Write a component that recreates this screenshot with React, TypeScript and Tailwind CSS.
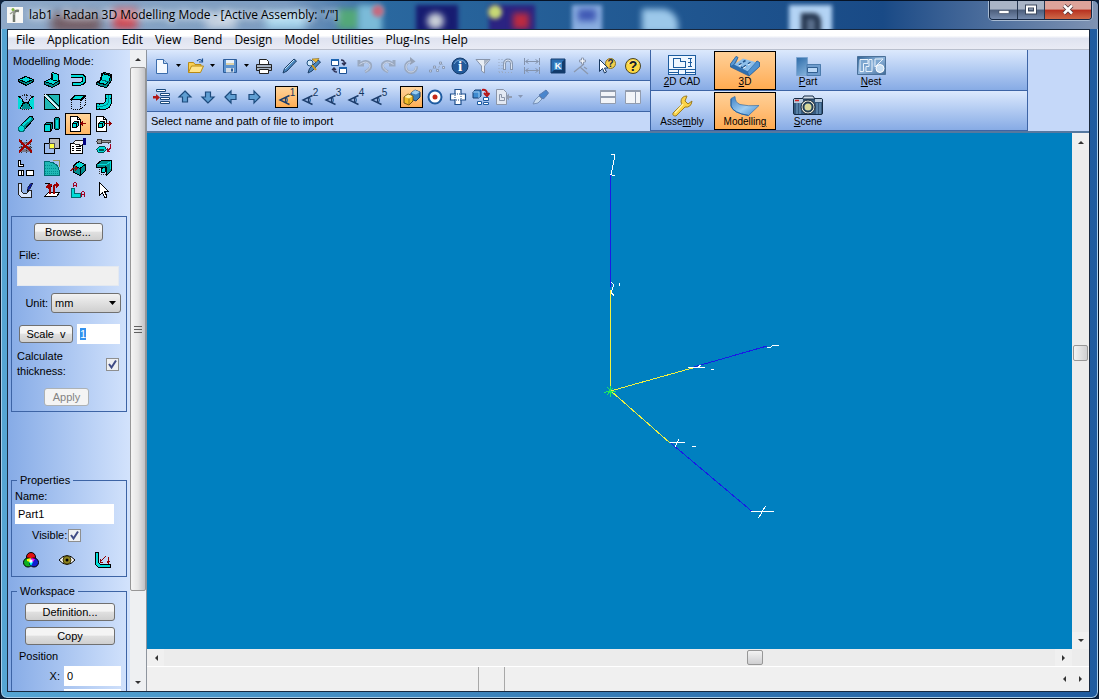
import React, { useEffect, useRef } from "react";

type Kids = { children?: React.ReactNode };

const C = "#00dcd8";
const D = "#008f90";

function Px({ children, smooth }: Kids & { smooth?: boolean }) {
  return (
    <svg width="16" height="16" viewBox="0 0 16 16" shapeRendering={smooth ? "auto" : "crispEdges"} aria-hidden="true" className="shrink-0">
      {children}
    </svg>
  );
}

function Ic({ children }: Kids) {
  return (
    <svg width="18" height="18" viewBox="0 0 18 18" fill="none" aria-hidden="true" className="shrink-0">
      {children}
    </svg>
  );
}

function PageArrow({ out }: { out?: boolean }) {
  return (
    <>
      <path d="M0.500 0.500h7l3 3v12h-10z" fill="#fff" stroke="#000" />
      <path d="M7.500 0.500v3h3" fill="none" stroke="#000" />
      <path d="M2.500 7.500l2-2h4v4l-2 2h-4z" fill={C} stroke="#000" />
      <path d="M2.500 7.500h4v4M6.500 7.500l2-2" fill="none" stroke="#000" />
      {out ? (
        <path d="M9 7h4V5h1v1h1v1h1v1h-1v1h-1v1h-1V8H9z" fill="#900000" />
      ) : (
        <path d="M16 7h-3V5h-1v1h-1v1h-1v1h1v1h1v1h1V8h3z" fill="#900000" />
      )}
    </>
  );
}

const modes: { name: string; art: React.ReactNode }[] = [
  {
    name: "Flat sheet",
    art: (
      <>
        <path d="M0.500 7.500l7-3 8 3v2l-7 4-8-4z" fill={D} stroke="#000" />
        <path d="M1 7.500l7-3 7 3-7 3z" fill={C} stroke="#000" />
      </>
    ),
  },
  {
    name: "Flange",
    art: (
      <>
        <path d="M0.500 9.500l7-3 8 2v3l-7 4-8-3z" fill={D} stroke="#000" />
        <path d="M1 9.500l6-3 8 2-6 4z" fill={C} stroke="#000" />
        <path d="M7.500 1.500l1-1 6 2v7l-7-2z" fill={C} stroke="#000" />
        <path d="M8.500 2v6" stroke="#000" />
      </>
    ),
  },
  {
    name: "Hem",
    art: (
      <>
        <path d="M1 3.500h9.500a4 4 0 0 1 0 8H2" fill="none" stroke="#000" strokeWidth="4" />
        <path d="M1 3.500h9.500a4 4 0 0 1 0 8H3" fill="none" stroke={C} strokeWidth="2" />
      </>
    ),
  },
  {
    name: "Curved sheet",
    art: (
      <>
        <path d="M5.500 1.500l3-1 7 2v6l-5 7-5-1-5-2v-2l4-2z" fill={D} stroke="#000" />
        <path d="M6.500 1.500l8 2-1 5-4 4-8-2 4-3z" fill={C} stroke="#000" />
        <path d="M6 8l7 2" stroke="#006c70" />
      </>
    ),
  },
  {
    name: "Corner",
    art: (
      <>
        <path d="M0 3q5 2 5 8l-3 4H0zM16 3q-5 2-5 8l3 4h2z" fill={C} />
        <path d="M5 10l3-2 3 2 2 5H3z" fill={D} />
        <path d="M0 2q6 3 5 8l-3 5M16 2q-6 3-5 8l3 5M5 10l3-2 3 2" fill="none" stroke="#000" />
        <path d="M2 2.500l6-2 6 2M8.500 1v6M4 15.500h8" fill="none" stroke="#222" strokeDasharray="1 1" />
      </>
    ),
  },
  {
    name: "Split",
    art: (
      <>
        <rect x="0.500" y="0.500" width="15" height="15" fill={D} stroke="#000" />
        <path d="M1 3l12 12H1zM4 1h11v11z" fill="#1fb8b5" />
        <path d="M1 1l14 14" stroke="#d8f0f8" strokeWidth="2" />
        <path d="M1 3l12 12M4 1l11 11" stroke="#000" />
      </>
    ),
  },
  {
    name: "Box",
    art: (
      <>
        <path d="M1 5.500l4-4h10l-4 4z" fill={C} stroke="#000" />
        <path d="M1.500 6v9h9V6M11 15l4-4V2" fill="none" stroke="#000" strokeDasharray="1 1" />
        <path d="M11 6.500l4-4" stroke="#000" strokeWidth="2" />
      </>
    ),
  },
  {
    name: "Elbow",
    art: (
      <>
        <path d="M9.500 0.500h6v6q0 9-9 9h-6v-6h5q4 0 4-4z" fill={C} stroke="#000" />
        <path d="M3.500 10v5M10 4.500h5" stroke="#000" strokeDasharray="1 1" />
        <path d="M12.500 1v5q0 6-6 6H1" fill="none" stroke={D} />
      </>
    ),
  },
  {
    name: "Rod",
    art: (
      <>
        <path d="M1.500 10.500l10-10h3l1 3-10 11z" fill={D} stroke="#000" />
        <path d="M4 10l9-8" stroke={C} strokeWidth="2" />
        <circle cx="3.500" cy="12.500" r="3" fill={C} stroke="#006c70" />
      </>
    ),
  },
  {
    name: "Blocks",
    art: (
      <>
        <path d="M0.500 8.500l2-2h6v6l-2 3h-6z" fill={D} stroke="#000" />
        <path d="M0.500 8.500h6v7M6.500 8.500l2-2" fill="none" stroke="#000" />
        <rect x="1" y="9" width="5" height="6" fill={C} />
        <rect x="10.500" y="1.500" width="5" height="12" rx="2" fill={D} stroke="#000" />
        <path d="M12.500 4v8" stroke={C} strokeWidth="2" />
      </>
    ),
  },
  { name: "Import", art: <PageArrow /> },
  { name: "Export", art: <PageArrow out /> },
  {
    name: "Delete",
    art: (
      <>
        <path d="M4 4h9v2H4zM2 8h11v2H2zM3 11h11v3H3z" fill="#77798c" />
        <path d="M3.500 2v13M8.500 2v13M12.500 2v13M1 9.500h13" stroke="#333" strokeDasharray="1 1" />
        <path d="M1 2l13 12M14 2L1 14" stroke="#a00000" strokeWidth="2" />
      </>
    ),
  },
  {
    name: "Combine",
    art: (
      <>
        <rect x="5.500" y="0.500" width="10" height="10" fill="#b9b9b9" stroke="#000" />
        <rect x="0.500" y="5.500" width="10" height="10" fill="none" stroke="#000" />
        <rect x="5.500" y="5.500" width="5" height="5" fill="#ffff40" stroke="#555" />
      </>
    ),
  },
  {
    name: "Edit properties",
    art: (
      <>
        <path d="M0.500 5.500h12v10h-12z" fill="#fff" stroke="#000" />
        <path d="M2 8.500h2M6 8.500h5M2 10.500h2M6 10.500h5M2 12.500h2M6 12.500h5" stroke="#000" />
        <path d="M3 5l3-3h7l2 3-4 3-3-2H5z" fill="#f2f2f2" stroke="#222" />
        <path d="M13 0h3v7h-3z" fill="#000080" />
      </>
    ),
  },
  {
    name: "Key",
    art: (
      <>
        <path d="M5 2.500h9v2H5M12 4v2" fill="#999" stroke="#444" />
        <circle cx="3.500" cy="3.500" r="2.500" fill="#999" stroke="#333" />
        <path d="M0.500 11.500l3-3h5l2 3-3 3h-5z" fill={C} stroke="#004f50" />
        <path d="M3 11.500h5" stroke="#004f50" strokeWidth="2" />
        <path d="M14.500 6v4l-3 3M11 10v3h3" fill="none" stroke="#a00020" />
      </>
    ),
  },
  {
    name: "Nest outlines",
    art: (
      <>
        <path d="M0.500 0.500h2v4h3v2h-5z" fill="#fff" stroke="#000" />
        <path d="M0.500 10.500h5v5h-5zM8.500 10.500h7v5h-7z" fill="#fff" stroke="#000" />
        <path d="M3.500 11v5" stroke="#000" />
      </>
    ),
  },
  {
    name: "Fillet",
    art: (
      <>
        <path d="M0.500 1.500h4q11 2 11 11v3h-15z" fill="#1fb8b5" stroke="#006c70" />
        <path d="M1 5h7M1 8h11M1 11h13M1 13h14" stroke={D} strokeDasharray="1 1" />
        <path d="M9 0.500h6.500v6" fill="none" stroke="#95955a" />
      </>
    ),
  },
  {
    name: "Insert block",
    art: (
      <>
        <path d="M3.500 5.500l5-4 7 3v6l-5 5-7-3z" fill={D} stroke="#000" />
        <path d="M4 5.500l5-4 6 3-5 4z" fill={C} stroke="#000" />
        <path d="M10.500 8v7" stroke="#000" />
        <path d="M0 10h1V9h1V8h3V6h1v1h1v1h1v1H7v1H6v1H5V9H3v1H2v1H0z" fill="#8c1010" />
      </>
    ),
  },
  {
    name: "Bracket",
    art: (
      <>
        <path d="M0.500 4.500l5-4h10v10l-5 5v-8h-10z" fill={D} stroke="#000" />
        <path d="M2 4h9l3-2v7" fill="none" stroke={C} />
        <path d="M5 9l4-2v5l-4 1z" fill={C} stroke="#000" />
        <path d="M3.500 9v5h7" fill="none" stroke="#333" strokeDasharray="1 1" />
      </>
    ),
  },
  {
    name: "Sketch",
    art: (
      <>
        <path d="M0.500 1.500h3v6q0 4 4 4 2 0 3-3h3v7h-10l-3-3z" fill="#d7e4fb" stroke="#222" />
        <path d="M15 1l-3 6-3 2 1-4 3-4z" fill="#0e1f9c" stroke="#000" strokeWidth="0.500" />
      </>
    ),
  },
  {
    name: "Unfold",
    art: (
      <>
        <path d="M0.500 14.500l4-4h11l-3 4z" fill="#fff" stroke="#000" />
        <path d="M1 1.500h5M4 4.500h4" stroke="#000" />
        <path d="M5 3h2v9H5zM9 12V4q0-2 3-2V0l4 3-4 3V4h-1v8z" fill="#a00000" />
        <path d="M1 5l3-3h4v2H5v3z" fill="#a00000" />
      </>
    ),
  },
  {
    name: "Dimension",
    art: (
      <>
        <path d="M1.500 6.500h3v5h6v4h-9z" fill={C} stroke="#006c70" />
        <path d="M3.500 1v4M6.500 1v4M4 0.500h2M4 3.500h2M11.500 10v5M14.500 10v5M12 9.500h2M12 12.500h2" stroke="#a00020" />
      </>
    ),
  },
  {
    name: "Select",
    art: <path d="M3.500 0.500v13l3-3 2 5h2v-2l-2-4h4z" fill="#fff" stroke="#000" />,
  },
];

function ToolButton({ label, active, disabled, children }: Kids & { label: string; active?: boolean; disabled?: boolean }) {
  return (
    <button
      aria-label={label}
      disabled={disabled}
      className={
        active
          ? "flex h-[22px] w-[23px] shrink-0 items-center justify-center border border-black bg-gradient-to-b from-[#ffd49a] to-[#ffae54]"
          : "flex h-[22px] w-[23px] shrink-0 items-center justify-center"
      }
    >
      {children}
    </button>
  );
}

function Drop({ label, dim }: { label: string; dim?: boolean }) {
  return (
    <button aria-label={label} className="flex h-[22px] w-[11px] shrink-0 items-center justify-center">
      <svg width="5" height="3" viewBox="0 0 5 3" aria-hidden="true">
        <path d="M0 0h5L2.500 3z" fill={dim ? "#8797b5" : "#000"} />
      </svg>
    </button>
  );
}

const Gap = () => <span className="w-[3px] shrink-0" />;

const OUT = "#1c4a7c";
const MID = "#5f9ed2";
const GR = "#9aa9c0";

function Arrow({ turn }: { turn: number }) {
  return (
    <Ic>
      <path d="M9 3l6 6h-3.500v5h-5V9H3z" transform={`rotate(${turn} 9 9)`} fill={MID} stroke={OUT} strokeWidth="1.200" />
    </Ic>
  );
}

function ViewAngle({ n, active }: { n: number; active?: boolean }) {
  return (
    <ToolButton label={`View ${n}`} active={active}>
      <span className="flex items-start text-[10px] leading-[10px] text-[#12355e]">
        <svg width="12" height="18" viewBox="0 0 12 18" fill="none" aria-hidden="true">
          <path d="M11.500 7.500L2 12l9.500 4.500M8.500 9q-2 3 0 6" stroke="#1c3d6c" strokeWidth="1.400" />
          <path d="M9 9.500q2 2.500 0 5z" fill="#2b6aa8" />
        </svg>
        {n}
      </span>
    </ToolButton>
  );
}

function MainToolbar() {
  return (
    <div className="flex h-[31px] items-center border-b border-[#3d64a5] bg-gradient-to-b from-[#dce9fd] to-[#87abe5] pt-px pr-[6px] pl-[3px]">
      <ToolButton label="New">
        <Ic><path d="M3.500 2.500h7l4 4v10h-11z" fill="#f4f9ff" stroke="#3b6cab" /><path d="M10.500 2.500v4h4" fill="#bcd6f2" stroke="#3b6cab" /></Ic>
      </ToolButton>
      <Drop label="New options" />
      <ToolButton label="Open">
        <Ic><path d="M1.500 15.500v-10h5l1.500 2h6v3" fill="#f8cf55" stroke="#b98a14" /><path d="M1.500 15.500l3-6.500h12l-3 6.500z" fill="#ffe48a" stroke="#b98a14" /><path d="M10 4q3-3 5 0M15.500 1.500V5H12" stroke="#1b4f92" strokeWidth="1.200" /></Ic>
      </ToolButton>
      <Drop label="Open options" />
      <ToolButton label="Save">
        <Ic><path d="M2.500 2.500h13v13h-13z" fill="#5d94cf" stroke="#2c5c9a" /><path d="M5 3h8v5H5z" fill="#e8f2fc" /><path d="M5 11h8v4.500H5z" fill="#cfdbe8" /><path d="M10 11.500h2v3h-2z" fill="#2c5c9a" /><path d="M5 6h8v2H5z" fill="#dfd2a8" /></Ic>
      </ToolButton>
      <Drop label="Save options" />
      <ToolButton label="Print">
        <Ic><path d="M4.500 7V2.500h7l2 2V7" fill="#fff" stroke="#222" /><path d="M1.500 7.500h15v6h-15z" fill="#aab6c6" stroke="#222" /><path d="M2 10.500h14" stroke="#333" /><path d="M4.500 12.500h9v4h-9z" fill="#fff" stroke="#222" /></Ic>
      </ToolButton>
      <Gap />
      <ToolButton label="Pen">
        <Ic><path d="M2 16l1.500-4.500L13 2l2.500 2L6 14z" fill="#4b87bd" stroke="#1c3f68" /><path d="M4 12l9-9" stroke="#bfe0f5" /></Ic>
      </ToolButton>
      <ToolButton label="Pencil settings">
        <Ic><path d="M4 16l1.500-4.500L14 3l2.500 2L8 14z" fill="#4b87bd" stroke="#1c3f68" /><circle cx="6" cy="6" r="3" fill="#d3eafa" stroke="#205080" /><path d="M8 8l4 5" stroke="#d09818" strokeWidth="2" /><path d="M8 2l7-.5-3 4z" fill="#f4bf35" stroke="#7d611a" strokeWidth=".6" /></Ic>
      </ToolButton>
      <Gap />
      <ToolButton label="Swap windows">
        <Ic><path d="M1.500 2.500h7v6h-7zM9.500 10.500h7v6h-7z" fill="#fff" stroke="#1b4f92" /><path d="M1 3h8M9 11h8" stroke="#1b63b0" strokeWidth="2" /><path d="M11 3q4 0 3 4M12 6l2 2 2-2.500M7 15q-4 0-3-3M2 13l2-2 2 2" stroke="#2b2f52" strokeWidth="1.400" /></Ic>
      </ToolButton>
      <Gap />
      <ToolButton label="Undo" disabled>
        <Ic><path d="M3 3v5h5M3.500 7.500Q10 2 14 6.500q2.500 5-5 8.500" stroke={GR} strokeWidth="3" /><path d="M3.500 7.500Q10 3 13.500 7q2 4-4 7.500" stroke="#cbd6ea" /></Ic>
      </ToolButton>
      <ToolButton label="Redo" disabled>
        <Ic><path d="M15 3v5h-5M14.500 7.500Q8 2 4 6.500q-2.500 5 5 8.500" stroke={GR} strokeWidth="3" /><path d="M14.500 7.500Q8 3 4.500 7q-2 4 4 7.500" stroke="#cbd6ea" /></Ic>
      </ToolButton>
      <ToolButton label="Repeat" disabled>
        <Ic><path d="M14.500 9.500a5.500 5.500 0 1 1-5-5" stroke={GR} strokeWidth="3" /><path d="M8 0l5.500 4.500L8 8z" fill="#96a2b6" /><path d="M14 10a5 5 0 1 1-5-5" stroke="#cbd6ea" /></Ic>
      </ToolButton>
      <Gap />
      <ToolButton label="Points" disabled>
        <Ic><path d="M3 14l3.500-4 3 3L13 6l3 4" stroke={GR} strokeDasharray="2 1" /><path d="M1.500 13h2v2h-2zM5.500 9h2v2h-2zM8.500 12.500h2v2h-2zM11.500 5h2v2h-2zM14.500 9.500h2v2h-2z" fill="#d5deed" stroke="#8090aa" strokeWidth=".8" /></Ic>
      </ToolButton>
      <ToolButton label="Information">
        <Ic><circle cx="9" cy="9" r="8" fill="#225a9a" stroke="#153c6c" /><path d="M3 7a6.500 6.500 0 0 1 12 0" stroke="#75a6d5" /><text x="9" y="14" textAnchor="middle" fill="#fff" className="font-['Liberation_Serif',serif] text-[15px] font-bold">i</text></Ic>
      </ToolButton>
      <ToolButton label="Filter">
        <Ic><path d="M2 2.500h14L10.500 9v7l-3-2V9z" fill="#e8edf4" stroke="#8794aa" /><path d="M10 3h5l-5 5z" fill="#a9b4c4" /></Ic>
      </ToolButton>
      <ToolButton label="Snap" disabled>
        <Ic><path d="M2 2v13M5 2v13M2 15.500h14" stroke={GR} strokeDasharray="1 2" /><path d="M7.500 13V6.500a3.500 3.500 0 0 1 7 0V13" stroke="#8797b0" strokeWidth="3" /><path d="M7.500 12V6.500a3.500 3.500 0 0 1 7 0V12" stroke="#dbe4f2" /></Ic>
      </ToolButton>
      <Gap />
      <ToolButton label="Distances" disabled>
        <Ic><path d="M1.500 1v7M16.500 1v7M1.500 10v7M16.500 10v7M3 4.500h12M3 13.500h12M5.500 2.500l-3 2 3 2M12.500 2.500l3 2-3 2M5.500 11.500l-3 2 3 2M12.500 11.500l3 2-3 2" stroke="#8594ad" /></Ic>
      </ToolButton>
      <Gap />
      <ToolButton label="Keypad">
        <Ic><path d="M2 2h14v14H2z" fill="#2b6fb2" stroke="#163d6e" /><path d="M2 16l3-3h8V5l3-3v14z" fill="#123a6b" /><path d="M5 5h8v8H5z" fill="#3e8ac8" /><text x="9" y="12" textAnchor="middle" fill="#fff" className="font-['Liberation_Sans',sans-serif] text-[9px] font-bold">K</text></Ic>
      </ToolButton>
      <ToolButton label="Trim" disabled>
        <Ic><path d="M2 15L12 7M8 10l8 7M12 10l3 2" stroke="#8b98ae" strokeWidth="1.300" /><path d="M9.500 1h2v2h2v2h-2v2h-2V5h-2V3h2z" fill="#f3f7fc" stroke="#7d8aa1" strokeWidth=".8" /></Ic>
      </ToolButton>
      <Gap />
      <ToolButton label="Context help">
        <Ic><circle cx="12.500" cy="6.500" r="5" fill="#f4cf4d" stroke="#8b7321" /><text x="12.500" y="10" textAnchor="middle" fill="#202840" className="font-['Liberation_Sans',sans-serif] text-[10px] font-bold">?</text><path d="M1.500 2.500v12l3-3 2 4.500 2-1-2-4h3.500z" fill="#fff" stroke="#17375f" /></Ic>
      </ToolButton>
      <Gap />
      <ToolButton label="Help">
        <Ic><circle cx="9" cy="9" r="7.500" fill="#fcd843" stroke="#4a4425" /><path d="M4 7a5.500 5.500 0 0 1 10 0" stroke="#fff2ac" /><text x="9" y="14" textAnchor="middle" fill="#15202c" className="font-['Liberation_Sans',sans-serif] text-[14px] font-bold">?</text></Ic>
      </ToolButton>
    </div>
  );
}

function SecondToolbar() {
  return (
    <div className="flex h-[31px] items-center border-b border-[#3d64a5] bg-gradient-to-b from-[#dce9fd] to-[#87abe5] pt-px pr-[6px] pl-[3px]">
      <ToolButton label="Insert row">
        <Ic><path d="M3.500 1.500h9v2h-9zM7.500 5.500h9v2h-9zM7.500 9.500h9v2h-9zM7.500 13.500h9v2h-9z" fill="#fff" stroke={OUT} /><path d="M0 8h3V6l4 3.500L3 13v-2.500H0z" fill="#b01818" /></Ic>
      </ToolButton>
      <ToolButton label="Move up"><Arrow turn={0} /></ToolButton>
      <ToolButton label="Move down"><Arrow turn={180} /></ToolButton>
      <ToolButton label="Move left"><Arrow turn={270} /></ToolButton>
      <ToolButton label="Move right"><Arrow turn={90} /></ToolButton>
      <span className="w-[10px]" />
      <ViewAngle n={1} active />
      <ViewAngle n={2} />
      <ViewAngle n={3} />
      <ViewAngle n={4} />
      <ViewAngle n={5} />
      <span className="w-[10px]" />
      <ToolButton label="Shaded" active>
        <Ic><path d="M8 5l4-3 5 2v5l-4 4-5-2z" fill="#3d80ba" stroke="#1c3f68" /><path d="M8 5l5 1.500L17 4l-5-2z" fill="#9ccdf0" /><path d="M1 9l4-3 5 2v5l-4 4-5-2z" fill="#f2bd28" stroke="#6f5512" /><path d="M1.500 9L6 10.500 9.500 8 5 6.500z" fill="#fff0a0" /><path d="M6 10.500V16" stroke="#a07a14" /></Ic>
      </ToolButton>
      <ToolButton label="Target">
        <Ic><circle cx="9" cy="9" r="6.500" fill="#fff" stroke="#1e5ba0" strokeWidth="2" /><circle cx="9" cy="9" r="2.500" fill="#c42a18" /></Ic>
      </ToolButton>
      <ToolButton label="Unfold part">
        <Ic><path d="M6 1.500h6v4.500h4.500v6H12v4.500H6V12H1.500V6H6z" fill="#fff" stroke="#1e4f8c" strokeWidth="1.200" /><path d="M6 6h6v6H6z" stroke="#1e4f8c" strokeDasharray="1 1" /></Ic>
      </ToolButton>
      <ToolButton label="Explode">
        <Ic><path d="M1 4l2-2h6v6l-2 2H1z" fill="#3f8bd0" stroke="#183f72" /><path d="M1 4h6v6" stroke="#9cc8ee" /><path d="M10 2q5-1 5 4M12 5l3 3 2.500-3" stroke="#b81414" strokeWidth="2" /><path d="M11.500 9.500h5v3h-5zM5.500 13.500h4v3h-4zM11.500 14.500h5v2h-5z" fill="#fff" stroke="#1e5ba0" /></Ic>
      </ToolButton>
      <ToolButton label="Export view" disabled>
        <Ic><path d="M1.500 1.500h7l3 3v12h-10z" fill="#e3e9f3" stroke="#8b95a8" /><path d="M4.500 6.500h2v3h3v3h-5z" stroke="#8b95a8" /><path d="M17 8h-3V5.500L10.500 9l3.500 3.500V10h3z" fill="#929db1" /></Ic>
      </ToolButton>
      <Drop label="Export view options" dim />
      <Gap />
      <ToolButton label="Colour picker">
        <Ic><path d="M1 16l2-4 4-4 3 3-4 4z" fill="#c7dbf1" stroke="#7590b8" /><path d="M7 7l4 4 2-1.500 3.500-4.500-2.500-3-4 3z" fill="#4a86cd" stroke="#5b7cb0" /></Ic>
      </ToolButton>
      <div className="ml-auto flex gap-[2px]">
        <ToolButton label="Split horizontally">
          <Ic><path d="M1.500 2.500h15v13h-15z" fill="#f2f4f8" stroke="#929cae" /><path d="M1.500 3h15M1.500 9h15" stroke="#929cae" strokeWidth="2" /></Ic>
        </ToolButton>
        <ToolButton label="Split vertically">
          <Ic><path d="M1.500 2.500h15v13h-15z" fill="#f2f4f8" stroke="#929cae" /><path d="M1.500 3h15" stroke="#929cae" strokeWidth="2" /><path d="M11.500 3v13" stroke="#929cae" /></Ic>
        </ToolButton>
      </div>
    </div>
  );
}

function AppButton({ pre = "", hot, post = "", active, children }: Kids & { pre?: string; hot: string; post?: string; active?: boolean }) {
  return (
    <button
      className={
        active
          ? "flex h-full w-[62px] shrink-0 flex-col items-center justify-center border border-black bg-gradient-to-b from-[#ffd097] to-[#ffab50] text-[10px] leading-[10px]"
          : "flex h-full w-[62px] shrink-0 flex-col items-center justify-center border border-transparent text-[10px] leading-[10px]"
      }
    >
      <svg width="32" height="22" viewBox="0 0 32 22" fill="none" aria-hidden="true" className="shrink-0">
        {children}
      </svg>
      <span className="whitespace-nowrap">
        {pre}<u>{hot}</u>{post}
      </span>
    </button>
  );
}

function AppPanel() {
  return (
    <div className="flex w-[378px] flex-col border-x border-[#3d64a5]">
      <div className="flex h-[41px] gap-px border-b border-[#3d64a5] bg-gradient-to-b from-[#dce9fd] to-[#87abe5] pt-px">
        <AppButton hot="2" post="D CAD">
          <g shapeRendering="crispEdges">
            <path d="M2.500 0.500h27v19h-27z" fill="#eef6ff" stroke="#1d5c9e" />
            <path d="M7.500 3.500h7v3h5v6h-12zM22 3.500h4M24.500 4v8M22 7.500h4M22 11.500h4M3 14.500h26M3 17.500h10M12.500 15v4M19.500 15v4M20 17.500h9" stroke="#1d5c9e" />
          </g>
        </AppButton>
        <AppButton hot="3" post="D" active>
          <path d="M1.500 9L7 1.500l2 1L6 9l13 7 9-10 2.500 1.500v4L20 21 1.500 12z" fill="#2f6fb0" stroke="#24588f" strokeWidth=".6" />
          <path d="M5 9.500l9-6 14 4-9 9z" fill="#8dbfea" />
          <path d="M1.500 9L7 1.500l2 1-4 7-3.500 2z" fill="#5a9ad6" stroke="#24588f" strokeWidth=".5" />
          <path d="M18.500 17L28 6l2.500 1.500v4L20 21z" fill="#4f92d0" stroke="#24588f" strokeWidth=".5" />
          <path d="M10 10l2.500-1.500M14 7l2.500-1.500M14.500 12l2.500-1.500M19 9l2.500-1.500M12 12l2 1" stroke="#1f548c" strokeWidth="1.600" />
          <path d="M10 11l2.500-1.500M14.500 13l2.500-1.500M19 10l2.500-1.500" stroke="#fff" />
        </AppButton>
        <AppButton hot="P" post="art">
          <defs><linearGradient id="pg" x1="0" y1="0" x2="1" y2="1"><stop stopColor="#2d6ba8" /><stop offset="1" stopColor="#a9d0f3" /></linearGradient></defs>
          <path d="M4.500 2.500h11v7h13v11h-24z" fill="url(#pg)" stroke="#7ba3d0" />
          <path d="M15 9.500h13.500v11H15z" fill="#6f9dce" stroke="#4c7bac" />
          <path d="M15.500 12.500h10v5h-10z" fill="#bad7f6" stroke="#315f91" />
        </AppButton>
        <AppButton hot="N" post="est">
          <defs><linearGradient id="ng" x1="0" y1="0" x2="1" y2="1"><stop stopColor="#2f6396" /><stop offset=".5" stopColor="#8fb5dc" /><stop offset="1" stopColor="#3f6a97" /></linearGradient></defs>
          <path d="M2.500 1.500h28v18h-28z" fill="url(#ng)" stroke="#4a7099" />
          <path d="M5 4.500h8v4H8.500v8H5zM11 11.500h3v-7h3v12h-6zM20 4h8l-8 8z" fill="#7fa8d0" stroke="#e8f2fc" />
          <circle cx="25" cy="13.500" r="4" fill="#cae0f4" stroke="#fff" />
        </AppButton>
      </div>
      <div className="flex h-[40px] gap-px border-b border-[#3d64a5] bg-gradient-to-b from-[#dce9fd] to-[#87abe5] pt-px">
        <AppButton pre="Asse" hot="m" post="bly">
          <path d="M21 1q-6 0-6 6l1 2-9 9q-1 3 3 3l9-9q6 1 7-6l-4 3-3-3z" fill="#fbd346" stroke="#9b7b20" />
          <path d="M17 9l-8 9" stroke="#fff2a8" strokeWidth="1.500" />
        </AppButton>
        <AppButton pre="Modellin" hot="g" active>
          <defs><linearGradient id="mg" x1="0" y1="0" x2="1" y2="1"><stop stopColor="#3d80c4" /><stop offset=".55" stopColor="#9fcdf2" /><stop offset="1" stopColor="#3f86c9" /></linearGradient></defs>
          <path d="M2 3.500l4-2q0 6 5 8 8 2 19 1L19.500 20.500Q4 18 2 11z" fill="url(#mg)" stroke="#2e6dac" strokeWidth=".7" />
          <path d="M2 4v7q2 7 17.500 9.500" stroke="#2563a3" />
        </AppButton>
        <AppButton hot="S" post="cene">
          <rect x="1.500" y="3.500" width="29" height="16" rx="1.500" fill="#365a7f" stroke="#152b44" />
          <path d="M10 4l2-3h9l2 3z" fill="#cfdbe8" stroke="#152b44" />
          <path d="M2 4h9v4H2zM23 4h7v3h-7z" fill="#b7cadd" />
          <path d="M3 5.500h4" stroke="#d02020" strokeWidth="1.500" />
          <path d="M5 8v11M8 8v11M25 8v11M28 8v11" stroke="#79a7ce" />
          <circle cx="16" cy="12" r="7" fill="#e7e8db" stroke="#182838" />
          <circle cx="16" cy="12" r="5" fill="#234d6e" stroke="#182838" />
          <circle cx="16" cy="12" r="3.500" fill="#d9d99a" />
        </AppButton>
      </div>
    </div>
  );
}

function PushButton({ children, className = "", disabled }: Kids & { className?: string; disabled?: boolean }) {
  return (
    <button
      disabled={disabled}
      className={`h-[18px] rounded-[3px] border border-[#707070] bg-gradient-to-b from-[#f4f4f4] from-45% via-[#e0e0e0] via-50% to-[#cfcfcf] text-center leading-4 disabled:border-[#adb2b5] disabled:from-[#f4f4f4] disabled:via-[#f4f4f4] disabled:to-[#f4f4f4] disabled:text-[#838383] ${className}`}
    >
      {children}
    </button>
  );
}

function Check({ id }: { id: string }) {
  return (
    <span className="relative flex size-[13px] shrink-0">
      <input id={id} type="checkbox" defaultChecked className="size-[13px] appearance-none border border-[#8e8f8f] bg-[#eef0f3]" />
      <svg width="13" height="13" viewBox="0 0 13 13" fill="none" aria-hidden="true" className="pointer-events-none absolute inset-0">
        <path d="M3 6l2.500 3.500L10 2.500" stroke="#3f4b86" strokeWidth="2" />
      </svg>
    </span>
  );
}

function Tri({ dir }: { dir: "up" | "down" | "left" | "right" }) {
  const d = { up: "M0 5l3-3 3 3z", down: "M0 1l3 3 3-3z", left: "M5 0L2 3l3 3z", right: "M1 0l3 3-3 3z" }[dir];
  return (
    <svg width="6" height="6" viewBox="0 0 6 6" aria-hidden="true">
      <path d={d} fill="#333" />
    </svg>
  );
}

function Sidebar() {
  const scale = useRef<HTMLInputElement>(null);
  useEffect(() => {
    scale.current?.focus({ preventScroll: true });
    scale.current?.select();
  }, []);
  return (
    <aside className="w-[122px] shrink-0 overflow-hidden bg-gradient-to-r from-[#86abe6] to-[#d3e3fc] px-[3px] pt-1 text-[11px] leading-[15px]">
      <h2 className="pl-[2px]">Modelling Mode:</h2>
      <div className="grid w-[106px] grid-cols-4 pl-[2px]">
        {modes.map((m) => (
          <button
            key={m.name}
            aria-label={m.name}
            className={
              m.name === "Import"
                ? "flex h-[22px] w-[26px] items-center justify-center border border-black bg-gradient-to-b from-[#ffd49a] to-[#ffb663]"
                : "flex h-[22px] w-[26px] items-center justify-center"
            }
          >
            <Px>{m.art}</Px>
          </button>
        ))}
      </div>

      <div className="mt-[15px] flex flex-col border border-[#3d64a5] px-[5px] pt-[6px] pb-[5px]">
        <PushButton className="mr-[2px] w-[69px] self-center">Browse...</PushButton>
        <label htmlFor="file" className="mt-[7px] pl-[2px]">File:</label>
        <input id="file" disabled className="mt-[3px] h-5 w-[102px] border border-[#e4e9f0] bg-[#f0f0f0]" />
        <div className="mt-[7px] flex h-5 items-center justify-end gap-[3px]">
          <label htmlFor="unit">Unit:</label>
          <span className="relative flex">
            <select id="unit" className="h-5 w-[70px] appearance-none rounded-[3px] border border-[#707070] bg-gradient-to-b from-[#f2f2f2] to-[#cfcfcf] pl-[3px] leading-[18px]">
              <option>mm</option>
              <option>inch</option>
            </select>
            <svg width="7" height="4" viewBox="0 0 7 4" aria-hidden="true" className="pointer-events-none absolute top-2 right-[5px]">
              <path d="M0 0h7L3.500 4z" />
            </svg>
          </span>
        </div>
        <div className="mt-[11px] flex h-5 items-center gap-1 pl-[2px]">
          <PushButton className="w-[54px] whitespace-pre">Scale  v</PushButton>
          <input
            ref={scale}
            aria-label="Scale value"
            defaultValue="1"
            className="h-5 w-[43px] bg-white pl-[3px] outline-none selection:bg-[#3392ee] selection:text-white"
          />
        </div>
        <div className="mt-[5px] flex items-center justify-between pr-[2px]">
          <label htmlFor="calc">Calculate<br />thickness:</label>
          <Check id="calc" />
        </div>
        <PushButton disabled className="mt-[9px] mr-[5px] w-[45px] self-center">Apply</PushButton>
      </div>

      <fieldset className="mt-[60px] border border-[#3d64a5] px-[3px] pb-[7px]">
        <legend className="ml-[2px] px-[3px] leading-4">Properties</legend>
        <label htmlFor="name" className="mt-px block">Name:</label>
        <input id="name" defaultValue="Part1" className="block h-5 w-[99px] bg-white pl-[3px] outline-none" />
        <div className="mt-1 flex h-[15px] items-center gap-px pl-[17px]">
          <label htmlFor="visible">Visible:</label>
          <Check id="visible" />
        </div>
        <div className="mt-2 flex justify-between pr-[12px] pl-2">
          <button aria-label="Colour" className="flex h-[18px] items-center">
            <Px smooth>
              <circle cx="8" cy="5" r="4.500" fill="#e01010" stroke="#000" />
              <circle cx="5" cy="10.500" r="4.500" fill="#10b020" stroke="#000" />
              <circle cx="11" cy="10.500" r="4.500" fill="#1020d0" stroke="#000" />
              <path d="M4 7l4-1-1 4-3-1z" fill="#ff0" />
              <path d="M8 6l4 1-2 3z" fill="#f0f" />
              <path d="M6 10h4l-2 4z" fill="#0ff" />
              <circle cx="8" cy="9" r="1.700" fill="#fff" />
            </Px>
          </button>
          <button aria-label="Visibility" className="flex h-[18px] items-center">
            <Px smooth>
              <path d="M0 8q4-4.500 8-4.500T16 8q-4 4.500-8 4.500T0 8z" fill="#fff" stroke="#000" />
              <circle cx="8" cy="8" r="4" fill="#8f8420" stroke="#433d08" />
              <circle cx="8" cy="8" r="1.500" fill="#000" />
            </Px>
          </button>
          <button aria-label="Bend radius" className="flex h-[18px] items-center">
            <Px>
              <path d="M0.500 0.500h3v10l2 2h10v3h-12l-3-3z" fill={C} stroke="#000" />
              <path d="M11 4l-6 6M5 7v3h3M13.500 5v6M12 9l1.500 2L15 9" fill="none" stroke="#900000" />
            </Px>
          </button>
        </div>
      </fieldset>

      <fieldset className="mt-[6px] border border-[#3d64a5] px-[5px] pb-2">
        <legend className="px-[3px] leading-4">Workspace</legend>
        <PushButton className="mt-1 ml-2 block w-[90px]">Definition...</PushButton>
        <PushButton className="mt-[6px] ml-2 block w-[90px]">Copy</PushButton>
        <p className="mt-1 pl-[2px]">Position</p>
        <div className="mt-[2px] flex h-5 items-center justify-end gap-1">
          <label htmlFor="pos-x">X:</label>
          <input id="pos-x" defaultValue="0" className="h-5 w-[57px] bg-white pl-[3px] outline-none" />
        </div>
        <input aria-label="Y position" className="mt-[3px] ml-auto block h-5 w-[57px] bg-white pl-[3px] outline-none" />
      </fieldset>
    </aside>
  );
}

function SideScroll() {
  return (
    <div className="flex w-[17px] shrink-0 flex-col border-r border-[#8e959e] bg-[#eef0f2]">
      <button aria-label="Scroll panel up" className="flex h-[17px] items-center justify-center"><Tri dir="up" /></button>
      <div className="flex flex-[524] flex-col items-center justify-center gap-px rounded-[2px] border border-[#979797] bg-gradient-to-r from-[#f5f5f5] via-[#e6e6e6] to-[#c2c2c6]">
        <span className="h-[2px] w-[8px] border-b border-[#606060]" />
        <span className="h-[2px] w-[8px] border-b border-[#606060]" />
        <span className="h-[2px] w-[8px] border-b border-[#606060]" />
      </div>
      <div className="flex-[83]" />
      <button aria-label="Scroll panel down" className="flex h-[17px] items-center justify-center"><Tri dir="down" /></button>
    </div>
  );
}

function Viewport() {
  return (
    <div className="flex min-w-0 flex-1 items-center justify-center overflow-hidden bg-[#0080c0]">
      <svg width="925" height="516" viewBox="147 133 925 516" fill="none" shapeRendering="crispEdges" className="shrink-0" role="img" aria-label="Model axes">
        <path d="M610.500 175v112M692 367.500l75-21.500M669.500 442l82 69" stroke="#1a1ae6" />
        <path d="M610.500 290v101l82-23M611 391l59 52" stroke="#f0f040" />
        <path d="M611 154.500l4 .500-4 19.500 4 1.500M611 282l3 3-3 7 3 4M619.500 282.500v3M767 347.500l4-.500 2-2h6M688 367.500h17M697 368l4-3M711 369.500h3M670 442.500h15M675 447l4-8M692 446.500h4M751 511.500h23M758.500 518l7-12" stroke="#fff" />
        <path d="M604 392.500l6-1.500h6M610.500 386v11M607 387l7 8M607 395l6-7" stroke="#20e860" />
      </svg>
    </div>
  );
}

const thumb = "rounded-[2px] border border-[#979797]";

function Workspace() {
  return (
    <div className="flex min-h-0 min-w-0 flex-1 flex-col">
      <div className="flex min-h-0 flex-1">
        <Viewport />
        <div className="flex w-[17px] shrink-0 flex-col bg-[#ececec]">
          <button aria-label="Scroll up" className="flex h-[17px] items-center justify-center bg-[#f0f0f0]"><Tri dir="up" /></button>
          <div className="flex-[195]" />
          <div className={`mx-px h-4 bg-gradient-to-r from-[#f3f3f3] to-[#cfcfd1] ${thumb}`} />
          <div className="flex-[272]" />
          <button aria-label="Scroll down" className="flex h-[17px] items-center justify-center bg-[#f0f0f0]"><Tri dir="down" /></button>
        </div>
      </div>
      <div className="flex h-[18px] shrink-0 border-b border-white bg-[#ececec] pr-[17px]">
        <button aria-label="Scroll left" className="flex w-[17px] items-center justify-center bg-[#f0f0f0]"><Tri dir="left" /></button>
        <div className="flex-[584]" />
        <div className={`my-px w-4 bg-gradient-to-b from-[#f3f3f3] to-[#cfcfd1] ${thumb}`} />
        <div className="flex-[292]" />
        <button aria-label="Scroll right" className="flex w-[17px] items-center justify-center bg-[#f0f0f0]"><Tri dir="right" /></button>
      </div>
      <div className="flex h-6 shrink-0 items-center bg-[#f0f0f0]">
        <span className="h-full w-[332px] border-r border-[#a8a8a8]" />
        <span className="h-full w-[26px] border-r border-[#a8a8a8]" />
        <button aria-label="Previous pane" className="ml-auto flex w-[17px] justify-center"><Tri dir="left" /></button>
        <button aria-label="Next pane" className="flex w-[17px] justify-center"><Tri dir="right" /></button>
      </div>
    </div>
  );
}

const menus = ["File", "Application", "Edit", "View", "Bend", "Design", "Model", "Utilities", "Plug-Ins", "Help"];

function TitleBar() {
  return (
    <header className="relative flex h-[28px] shrink-0 items-center overflow-hidden rounded-t-[5px] bg-[#1f5f9f] pl-[6px] font-['Open_Sans',sans-serif]">
      <div className="pointer-events-none absolute inset-0 bg-gradient-to-r from-[#8fa9c8] from-0% via-[#7c9cc0] via-26% to-[#2a689f] to-35%" aria-hidden="true">
        <span className="absolute top-0 right-0 left-[380px] h-full bg-gradient-to-r from-[#2a689f] via-[#194a86] via-70% to-[#7f93b3]" />
        <span className="absolute top-3 left-[50px] h-5 w-[50px] bg-[#735e66] blur-[5px]" />
        <span className="absolute top-2 left-[112px] h-5 w-[24px] bg-[#d0404a] blur-[4px]" />
        <span className="absolute top-3 left-[205px] h-4 w-[30px] bg-[#c6d3e2] blur-[4px]" />
        <span className="absolute top-3 left-[265px] h-4 w-[40px] bg-[#a9d8ef] blur-[4px]" />
        <span className="absolute top-2 left-[337px] h-5 w-[22px] bg-[#53a878] blur-[3px]" />
        <span className="absolute top-1 left-[357px] h-7 w-[24px] bg-[#7bbbd8] blur-[3px]" />
        <span className="absolute top-1 left-[371px] size-[12px] rounded-full bg-[#c46a80] blur-[2px]" />
        <span className="absolute top-1 left-[415px] h-7 w-[42px] bg-[#171c71] blur-[2px]" />
        <span className="absolute top-3 left-[426px] h-4 w-[17px] rounded-full bg-[#cad0d8] blur-[3px]" />
        <span className="absolute top-1 left-[488px] h-7 w-[46px] bg-[#2b2382] blur-[2px]" />
        <span className="absolute top-1 left-[487px] size-[14px] rounded-full bg-[#c7d875] blur-[2px]" />
        <span className="absolute top-3 left-[512px] h-4 w-[16px] bg-[#bd2b40] blur-[3px]" />
        <span className="absolute top-1 left-[571px] h-7 w-[30px] bg-[#8aaee0] blur-[2px]" />
        <span className="absolute top-2 left-[577px] h-3 w-[18px] bg-[#3f58b4] blur-[3px]" />
        <span className="absolute top-2 left-[641px] h-6 w-[36px] rounded-tr-[16px] bg-[#9cc8ea] blur-[3px]" />
        <span className="absolute top-1 left-[788px] h-7 w-[43px] bg-[#b3d3f4] blur-[2px]" />
        <span className="absolute top-3 left-[800px] h-5 w-[20px] rounded-tr-[8px] border-[6px] border-b-0 border-[#25364f] bg-[#5a6f8c] blur-[2px]" />
      </div>
      <svg width="16" height="16" viewBox="0 0 16 16" fill="none" aria-hidden="true" className="relative">
        <rect width="16" height="16" fill="#f7f7f5" />
        <path d="M7 15V7q0-4 5-3" stroke="#71786d" strokeWidth="2.500" />
        <path d="M3 7l4-3v4" stroke="#9a9f94" strokeWidth="1.500" />
        <circle cx="6" cy="2.500" r="1.500" fill="#7cb33c" />
      </svg>
      <h1 className="relative pl-[6px] text-[12px] text-black [text-shadow:0_0_6px_#fff,0_0_8px_#dfe9f5]">
        lab1 - Radan 3D Modelling Mode - [Active Assembly: "/"]
      </h1>
      <div className="relative mr-[6px] ml-auto flex h-[19px] self-start overflow-hidden rounded-b-[4px] border border-t-0 border-[#152743] shadow-[0_0_0_1px_#a7bad2]">
        <button aria-label="Minimize" className="flex w-[28px] items-center justify-center border-r border-[#25364f] bg-gradient-to-b from-[#a9b4c6] from-45% via-[#4c5e7c] via-50% to-[#768bad]">
          <svg width="12" height="12" viewBox="0 0 12 12"><rect x="1" y="6.500" width="10" height="3" fill="#fff" stroke="#3b475c" strokeWidth=".6" /></svg>
        </button>
        <button aria-label="Maximize" className="flex w-[27px] items-center justify-center border-r border-[#25364f] bg-gradient-to-b from-[#a9b4c6] from-45% via-[#4c5e7c] via-50% to-[#768bad]">
          <svg width="12" height="12" viewBox="0 0 12 12" fill="none"><rect x="2" y="2.500" width="8" height="6" stroke="#3b475c" strokeWidth="4" /><rect x="2" y="2.500" width="8" height="6" stroke="#fff" strokeWidth="2" /></svg>
        </button>
        <button aria-label="Close" className="flex w-[46px] items-center justify-center bg-gradient-to-b from-[#dda39a] from-45% via-[#b72f1f] via-50% to-[#ce6848]">
          <svg width="12" height="12" viewBox="0 0 12 12" fill="none"><path d="M2 1.500l8 8M10 1.500l-8 8" stroke="#4d3238" strokeWidth="4" /><path d="M2 1.500l8 8M10 1.500l-8 8" stroke="#fff" strokeWidth="2.500" /></svg>
        </button>
      </div>
    </header>
  );
}

export default function App() {
  return (
    <div className="h-screen bg-[#10233d] font-['Liberation_Sans',sans-serif] text-black">
      <div className="flex h-full flex-col rounded-[7px] border border-[#061326] bg-gradient-to-r from-[#55a5d3] to-[#1f5b9f] pb-[6px] shadow-[inset_0_0_0_1px_#a8cce8]">
        <TitleBar />
        <div className="mr-2 ml-[6px] flex min-h-0 flex-1 flex-col border border-[#17283f] bg-[#c5d8f9]">
          <nav className="flex h-[20px] shrink-0 items-center gap-3 border-b border-[#b9bfcd] bg-gradient-to-b from-white from-30% via-[#dfe3f0] via-45% to-[#e9ebf5] pl-2 font-['Open_Sans',sans-serif] text-[12px] leading-[18px]">
            {menus.map((m) => (
              <button key={m}>{m}</button>
            ))}
          </nav>
          <div className="flex min-h-0 flex-1">
            <Sidebar />
            <SideScroll />
            <main className="flex min-w-0 flex-1 flex-col">
              <div className="flex shrink-0 border-b-2 border-[#56789f]">
                <div className="flex w-[503px] flex-col">
                  <MainToolbar />
                  <SecondToolbar />
                  <p className="pl-1 text-[11px] leading-[18px]">Select name and path of file to import</p>
                </div>
                <AppPanel />
              </div>
              <Workspace />
            </main>
          </div>
        </div>
      </div>
    </div>
  );
}
